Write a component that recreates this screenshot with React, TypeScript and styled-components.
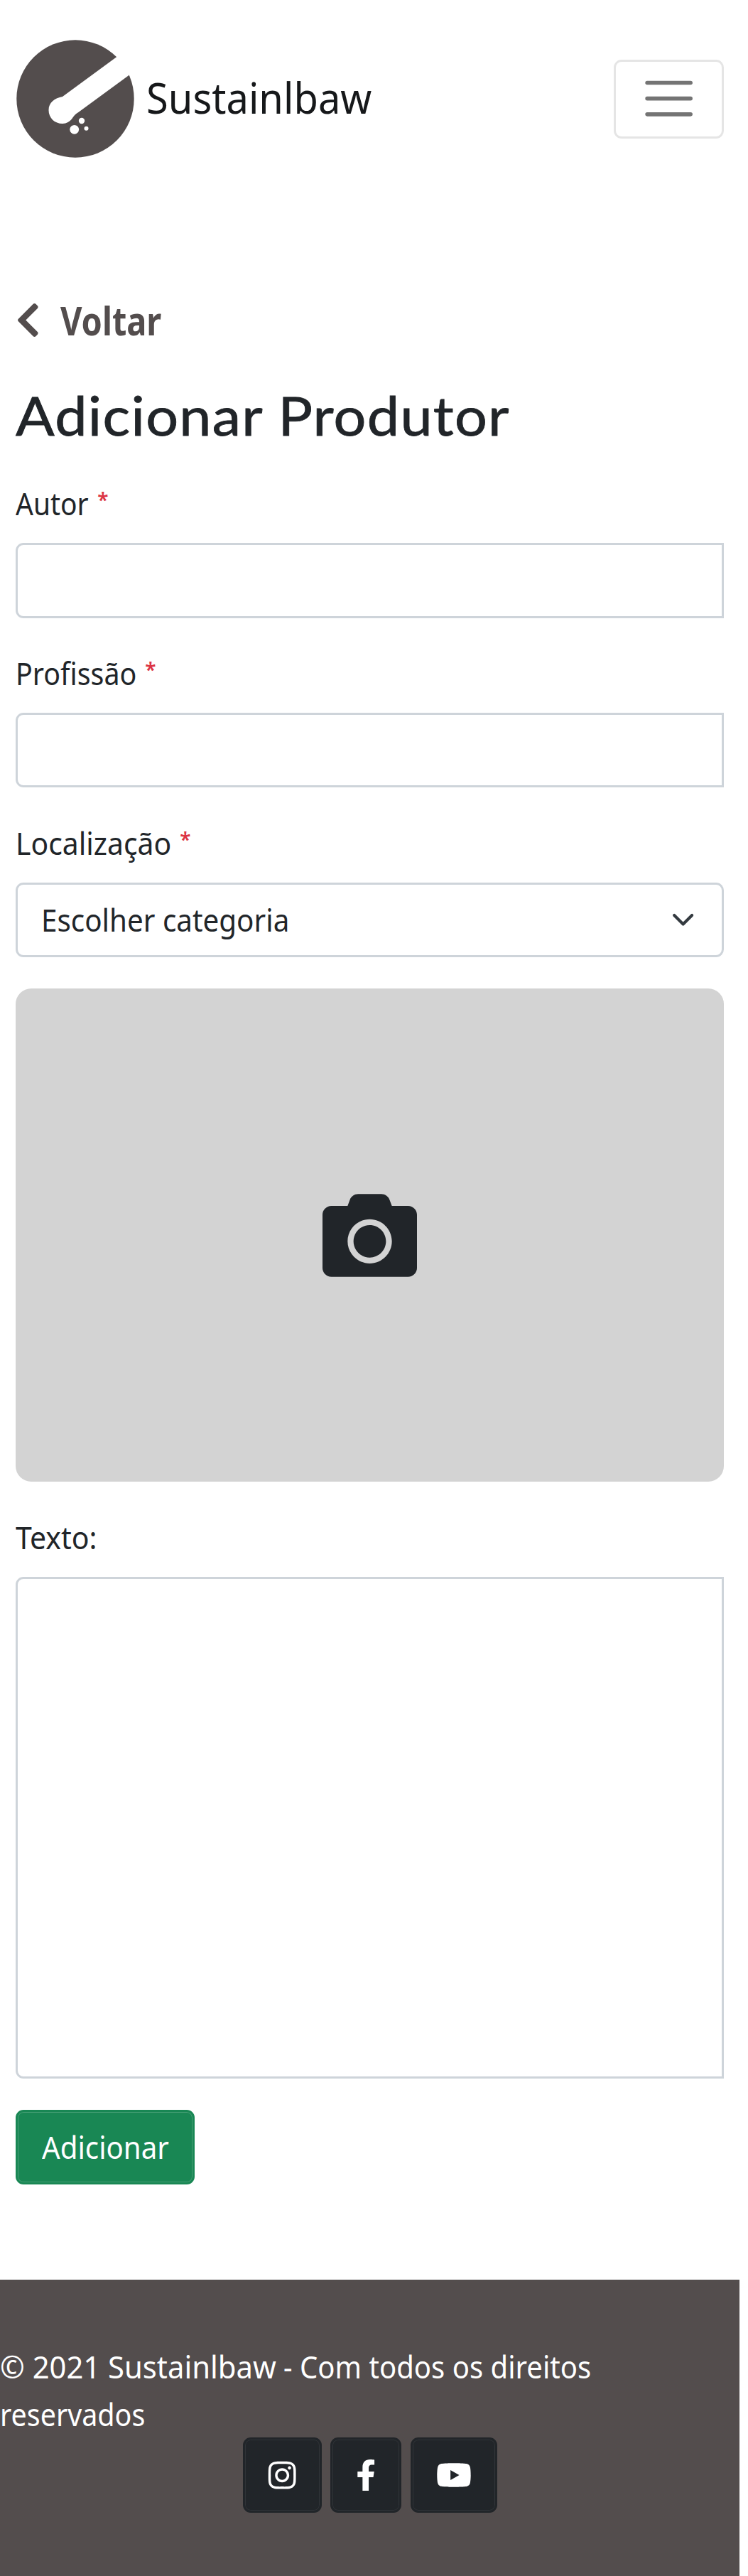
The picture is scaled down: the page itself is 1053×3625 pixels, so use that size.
import React, { useLayoutEffect, useRef, useState } from "react";
import styled, { createGlobalStyle } from "styled-components";
import { FaCamera, FaChevronLeft, FaFacebookF, FaInstagram, FaYoutube } from "react-icons/fa";

const ink = "#212529";
const brown = "#534d4d";
const line = "#ced4da";

const GlobalStyle = createGlobalStyle`
  *, *::before, *::after { box-sizing: border-box; }
  body {
    margin: 0;
    background: #fff;
    color: ${ink};
    font-family: "Noto Sans", "Open Sans", sans-serif;
    font-size: 43.5px;
    line-height: 66.6px;
  }
`;

const FitBox = styled.span<{ $w: number }>`
  display: inline-block;
  width: ${(p) => p.$w}px;
  white-space: nowrap;
`;

const FitInner = styled.span`
  display: inline-block;
  transform-origin: 0 50%;
`;

/* Condenses or widens a run of text so that it fills a given measure */
const Fit = ({ w, children }: { w: number; children: React.ReactNode }) => {
  const ref = useRef<HTMLSpanElement>(null);
  const [scale, setScale] = useState(1);
  useLayoutEffect(() => {
    const el = ref.current;
    if (!el) return;
    const measure = () => {
      if (el.offsetWidth) setScale(w / el.offsetWidth);
    };
    measure();
    document.fonts?.ready.then(measure);
  }, [w]);
  return (
    <FitBox $w={w}>
      <FitInner ref={ref} style={{ transform: `scaleX(${scale})` }}>
        {children}
      </FitInner>
    </FitBox>
  );
};

const Page = styled.div`
  width: 1041px;
  height: 3625px;
  display: flex;
  flex-direction: column;
`;

const Header = styled.header`
  height: 278px;
  padding: 0 22px 0 23px;
  display: flex;
  align-items: center;
  justify-content: space-between;
`;

const Brand = styled.a`
  display: flex;
  align-items: center;
  gap: 17px;
  color: #16181a;
`;

const BrandName = styled.span`
  padding-bottom: 4px;
  font-size: 60px;
  line-height: 80px;
`;

const Toggler = styled.button`
  width: 155px;
  height: 111px;
  padding: 0;
  display: flex;
  align-items: center;
  justify-content: center;
  background: transparent;
  border: 3px solid #e5e5e5;
  border-radius: 11px;
`;

const Main = styled.main`
  flex: 1;
  padding: 132px 22.2px 0;
`;

const Back = styled.a`
  display: flex;
  align-items: center;
  gap: 28px;
  height: 82px;
  color: ${brown};
  font-size: 55px;
  font-weight: 700;
`;

const BackIcon = styled(FaChevronLeft)`
  width: 34.7px;
  height: 55px;
  margin-bottom: 1px;
`;

const Title = styled.h1`
  margin: 34px 0 0;
  height: 149.4px;
  font-family: Lato, sans-serif;
  font-size: 75px;
  font-weight: 400;
  line-height: 116px;
  letter-spacing: 1.2px;
  -webkit-text-stroke: 0.8px ${ink};
`;

const Field = styled.div`
  margin-bottom: 44.4px;
`;

const Label = styled.label`
  display: block;
  height: 66.6px;
  margin-bottom: 22.2px;
`;

const Required = styled.span`
  color: #dc3545;
  margin-left: 12px;
  font-size: 28px;
  font-weight: 600;
  line-height: 0;
  vertical-align: 11px;
`;

const Input = styled.input`
  display: block;
  width: 100%;
  height: 105.5px;
  padding: 0 34px;
  background: #fff;
  border: 3px solid ${line};
  border-radius: 11px 0 0 11px;
  outline: 0;
`;

const SelectBox = styled.div`
  height: 105.5px;
  padding: 0 38px 0 32.5px;
  display: flex;
  align-items: center;
  justify-content: space-between;
  border: 3px solid ${line};
  border-radius: 11px;
`;

const Photo = styled.div`
  height: 694px;
  margin-bottom: 44.4px;
  display: flex;
  align-items: center;
  justify-content: center;
  background: #d3d3d3;
  border-radius: 22px;
`;

const TextArea = styled.textarea`
  display: block;
  width: 100%;
  height: 706px;
  background: #fff;
  border: 3px solid ${line};
  border-radius: 11px 0 0 11px;
  resize: none;
  outline: 0;
`;

const Button = styled.button<{ $w: number; $bg: string; $edge: string }>`
  width: ${(p) => p.$w}px;
  height: 105.5px;
  padding: 0;
  display: flex;
  align-items: center;
  justify-content: center;
  color: #fff;
  font: inherit;
  background: ${(p) => p.$bg};
  border: 3px solid ${(p) => p.$bg};
  border-radius: 11px;
  box-shadow: inset 0 0 0 1px ${(p) => p.$edge};
`;

const Footer = styled.footer`
  height: 417px;
  padding-top: 89px;
  background: ${brown};
  color: #fff;
`;

const Copyright = styled.p`
  margin: 0;
  height: 133.2px;
`;

const Social = styled.div`
  display: flex;
  justify-content: center;
  gap: 12.5px;
`;

const Logo = () => (
  <svg width="166" height="166" viewBox="23 56 166 166">
    <circle cx="106" cy="139" r="82.7" fill={brown} />
    <path
      d="M164 80.3 L88 136 C77 138 68.5 144 68.5 155 C68.5 166 77 174 88 174 C94 174 98 171 101 167.5 C104 163 106 160.5 110 158.3 L181 106.3 L195 90 L175 70 Z"
      fill="#fff"
    />
    <circle cx="104.7" cy="182.3" r="6.4" fill="#fff" />
    <circle cx="115" cy="170" r="4.2" fill="#fff" />
    <circle cx="121.5" cy="180.7" r="3" fill="#fff" />
  </svg>
);

export default function App() {
  return (
    <>
      <GlobalStyle />
      <Page>
        <Header>
          <Brand>
            <Logo />
            <BrandName>
              <Fit w={317.5}>Sustainlbaw</Fit>
            </BrandName>
          </Brand>
          <Toggler aria-label="Menu">
            <svg width="83.3" height="83.3" viewBox="0 0 30 30">
              <path d="M4 7h22M4 15h22M4 23h22" stroke="#747474" strokeWidth="2" strokeLinecap="round" />
            </svg>
          </Toggler>
        </Header>
        <Main>
          <Back>
            <BackIcon />
            <Fit w={142.5}>Voltar</Fit>
          </Back>
          <Title>
            <Fit w={696}>Adicionar Produtor</Fit>
          </Title>
          <Field>
            <Label>
              <Fit w={103}>Autor</Fit>
              <Required>*</Required>
            </Label>
            <Input />
          </Field>
          <Field>
            <Label>
              <Fit w={170}>Profissão</Fit>
              <Required>*</Required>
            </Label>
            <Input />
          </Field>
          <Field>
            <Label>
              <Fit w={219}>Localização</Fit>
              <Required>*</Required>
            </Label>
            <SelectBox>
              <Fit w={349}>Escolher categoria</Fit>
              <svg width="33.3" height="44.4" viewBox="0 -2 16 20">
                <path d="M2 5l6 6 6-6" fill="none" stroke="#343a40" strokeWidth="2" strokeLinecap="round" strokeLinejoin="round" />
              </svg>
            </SelectBox>
          </Field>
          <Photo>
            <FaCamera size={133} />
          </Photo>
          <Field>
            <Label>
              <Fit w={115}>Texto:</Fit>
            </Label>
            <TextArea />
          </Field>
          <Button $w={252} $bg="#198754" $edge="rgba(255,255,255,.2)">
            <Fit w={178.5}>Adicionar</Fit>
          </Button>
        </Main>
        <Footer>
          <Copyright>
            <Fit w={389}>© 2021 Sustainlbaw</Fit>
            <Fit w={33}>&nbsp;-&nbsp;</Fit>
            <Fit w={410}>Com todos os direitos</Fit>
            <br />
            <Fit w={204}>reservados</Fit>
          </Copyright>
          <Social>
            <Button $w={111} $bg={ink} $edge="rgba(255,255,255,.07)" aria-label="Instagram">
              <FaInstagram size={44.4} />
            </Button>
            <Button $w={100} $bg={ink} $edge="rgba(255,255,255,.07)" aria-label="Facebook">
              <FaFacebookF size={44.4} />
            </Button>
            <Button $w={122} $bg={ink} $edge="rgba(255,255,255,.07)" aria-label="YouTube">
              <FaYoutube size={50} />
            </Button>
          </Social>
        </Footer>
      </Page>
    </>
  );
}
